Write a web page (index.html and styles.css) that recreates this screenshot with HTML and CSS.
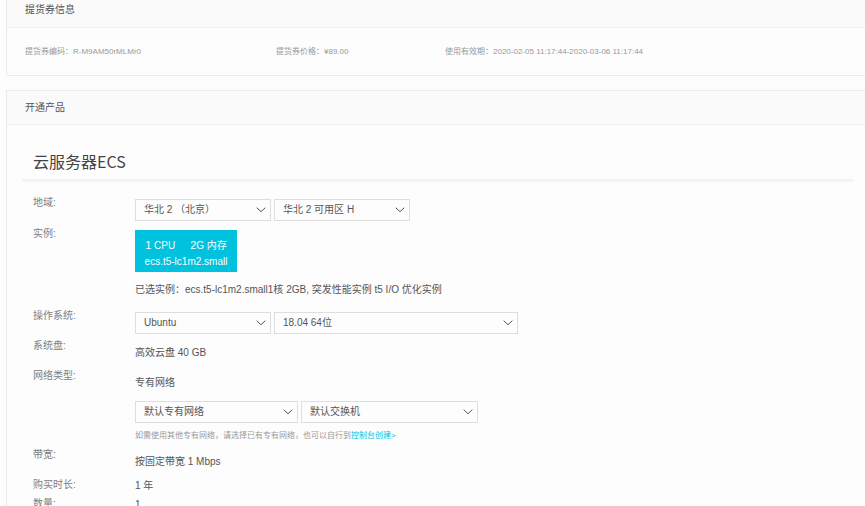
FILE: index.html
```html
<!DOCTYPE html>
<html lang="zh-CN">
<head>
<meta charset="utf-8">
<title>提货券</title>
<link rel="stylesheet" href="styles.css">
</head>
<body>
<svg class="defs" aria-hidden="true"><symbol id="chevron" viewBox="0 0 10 6"><path d="M0.700 0.700L5 4.700L9.300 0.700" fill="none" stroke="currentColor" stroke-width="1"/></symbol></svg>
<main class="page">
  <section class="card card-voucher">
    <h2 class="card-head">提货券信息</h2>
    <div class="facts">
      <span>提货券编码：R-M9AM50rMLMr0</span>
      <span>提货券价格：¥89.00</span>
      <span>使用有效期：2020-02-05 11:17:44-2020-03-06 11:17:44</span>
    </div>
  </section>
  <section class="card">
    <h2 class="card-head">开通产品</h2>
    <h1 class="product">云服务器ECS</h1>
    <form class="form">
      <div class="row row-region">
        <label class="label" for="region">地域:</label>
        <div class="value controls">
          <span class="select"><select id="region"><option>华北 2 （北京）</option></select><svg class="arrow"><use href="#chevron"/></svg></span>
          <span class="select"><select aria-label="可用区"><option>华北 2 可用区 H</option></select><svg class="arrow"><use href="#chevron"/></svg></span>
        </div>
      </div>
      <div class="row row-instance">
        <span class="label">实例:</span>
        <div class="value">
          <button class="instance" type="button">
            <span class="spec"><span><b>1</b> CPU</span><span><b>2</b>G 内存</span></span>
            <span>ecs.t5-lc1m2.small</span>
          </button>
          <p class="chosen">已选实例：ecs.t5-lc1m2.small1核 2GB, 突发性能实例 t5 I/O 优化实例</p>
        </div>
      </div>
      <div class="row">
        <label class="label" for="os">操作系统:</label>
        <div class="value controls">
          <span class="select"><select id="os"><option>Ubuntu</option></select><svg class="arrow"><use href="#chevron"/></svg></span>
          <span class="select select-wide"><select aria-label="系统版本"><option>18.04 64位</option></select><svg class="arrow"><use href="#chevron"/></svg></span>
        </div>
      </div>
      <div class="row row-text">
        <span class="label">系统盘:</span>
        <p class="value">高效云盘 40 GB</p>
      </div>
      <div class="row row-network">
        <span class="label">网络类型:</span>
        <div class="value">
          <p>专有网络</p>
          <div class="controls">
            <span class="select select-vpc"><select aria-label="专有网络"><option>默认专有网络</option></select><svg class="arrow"><use href="#chevron"/></svg></span>
            <span class="select select-switch"><select aria-label="交换机"><option>默认交换机</option></select><svg class="arrow"><use href="#chevron"/></svg></span>
          </div>
          <p class="hint">如需使用其他专有网络，请选择已有专有网络，也可以自行到<a href="#">控制台创建&gt;</a></p>
        </div>
      </div>
      <div class="row row-text">
        <span class="label">带宽:</span>
        <p class="value">按固定带宽 1 Mbps</p>
      </div>
      <div class="row row-tight">
        <span class="label">购买时长:</span>
        <p class="value">1 年</p>
      </div>
      <div class="row row-tight">
        <span class="label">数量:</span>
        <p class="value">1</p>
      </div>
    </form>
  </section>
</main>
</body>
</html>
```
FILE: styles.css
```css
* { box-sizing: border-box; }
body {
  margin: 0;
  background: #fdfdfd;
  color: #555;
  font: 10px/14px "Liberation Sans", "Noto Sans CJK SC", sans-serif;
}
h1, h2, p { margin: 0; font-weight: 400; }
.defs { position: absolute; width: 0; height: 0; }
.page { height: 100vh; overflow: hidden; padding-left: 6px; }
.card {
  border: 1px solid #ebebeb;
  border-right: 0;
  margin-bottom: 14px;
}
.card-head {
  height: 34px;
  padding: 0 18px;
  background: #fafafa;
  border-bottom: 1px solid #f1f1f1;
  font-size: 10px;
  line-height: 33px;
}
.card-voucher { border-top: 0; }
.card-voucher .card-head { height: 28px; line-height: 20px; }
.facts {
  display: grid;
  grid-template-columns: 251fr 169fr 420fr;
  padding: 16px 0 16px 18px;
  color: #999;
  font-size: 8px;
  line-height: 15px;
}
.product {
  margin: 24px 12px 0 15px;
  padding: 0 11px 6px;
  border-bottom: 2px solid #f2f2f2;
  box-shadow: 0 1px 1px #f6f6f6;
  color: #444;
  font-size: 16px;
  line-height: 24px;
  font-family: "Noto Sans CJK SC", sans-serif;
}
.form { padding: 15px 26px 0; }
.row { display: flex; padding-bottom: 5px; }
.label { width: 102px; flex: none; color: #808080; }
.value { flex: 1; min-width: 0; padding-top: 3px; }
.controls { display: flex; flex-wrap: wrap; gap: 3px; }
.select { position: relative; width: 136px; height: 22px; }
.select-wide { width: 244px; }
.select-vpc { width: 163px; }
.select-switch { width: 177px; }
select {
  appearance: none;
  display: block;
  width: 100%;
  height: 100%;
  padding: 0 24px 0 8px;
  border: 1px solid #dedede;
  border-radius: 0;
  background: #fdfdfd;
  color: #555;
  font: inherit;
}
.arrow {
  position: absolute;
  right: 5px;
  top: 8px;
  width: 10px;
  height: 6px;
  color: #555;
  pointer-events: none;
}
.instance {
  display: flex;
  flex-direction: column;
  align-items: center;
  justify-content: center;
  width: 102px;
  height: 42px;
  padding: 4px 0 0;
  border: 0;
  background: #00c1de;
  color: #fff;
  font: inherit;
  line-height: 16px;
}
.spec { display: flex; gap: 15px; }
.spec b { font-size: 11px; font-weight: 400; }
.row-region { padding-bottom: 6px; }
.row-instance { padding-bottom: 12px; }
.chosen { margin-top: 11px; }
.row-text { padding-bottom: 9px; }
.row-text .value, .row-network > .value { padding-top: 7px; }
.row-network .controls { margin-top: 11px; }
.hint { margin-top: 6px; color: #999; font-size: 8px; }
.hint a { color: #00c1de; text-decoration: none; }
.row-tight { padding-bottom: 4px; }
.row-tight .value { padding-top: 1px; }
```
